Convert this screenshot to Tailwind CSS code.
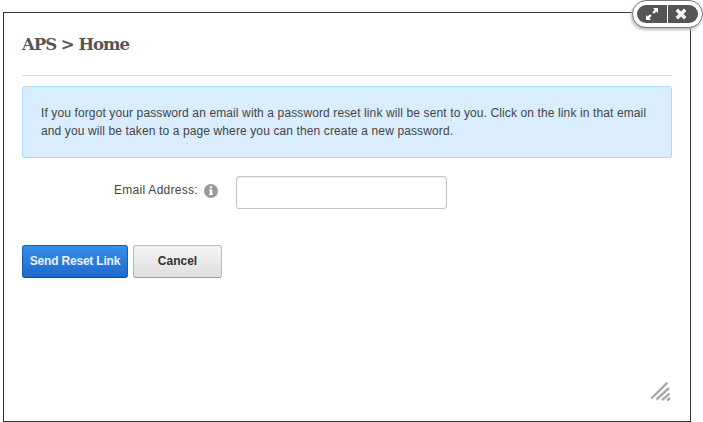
<!DOCTYPE html>
<html lang="en">
	<head>
		<meta charset="UTF-8" />
		<meta name="viewport" content="width=device-width, initial-scale=1.0" />
		<title>APS &gt; Home</title>
		<script src="https://cdn.jsdelivr.net/npm/@tailwindcss/browser@4"></script>
	</head>
	<body class="h-[422px] overflow-hidden bg-white pt-3 pl-[3px] font-['Liberation_Sans',Arial,sans-serif] text-xs text-[#444]">
		<!-- Dialog -->
		<div class="relative flex h-[410px] w-[688px] flex-col border border-[#333] px-[18px]">
			<h1 class="h-[63px] border-b border-[#ddd] pt-5 font-['DejaVu_Serif',serif] text-[16.5px] leading-6 font-bold tracking-[-1px] whitespace-nowrap text-[#555]">APS &gt; Home</h1>

			<!-- Notice -->
			<div class="mt-2.5 h-[72px] rounded-[3px] border border-[#a9d9fb] bg-[#d9edfe] px-[18px] pt-[17px] leading-[18px] tracking-[0.117px] whitespace-nowrap">
				<p>If you forgot your password an email with a password reset link will be sent to you. Click on the link in that email</p>
				<p>and you will be taken to a page where you can then create a new password.</p>
			</div>

			<form>
				<div class="mt-[18px] flex">
					<label for="email" class="flex w-[214px] pt-[5px] pl-[92px] leading-[18px] whitespace-nowrap">
						<span class="w-[90px] tracking-[0.28px]">Email Address:</span>
						<svg class="mt-[3px] size-[14px]" viewBox="0 0 14 14">
							<circle cx="7" cy="7" r="7" fill="#999" />
							<path d="M5.8 2.2h2.4v2H5.8zM5 5.5h3.2v4.2H9V11H5V9.7h.9V6.8H5z" fill="#fff" />
						</svg>
					</label>
					<input id="email" type="text" class="h-[33px] w-[211px] rounded-[3px] border border-[#c4c4c4] bg-white px-2 shadow-[inset_0_1px_2px_#eee]" />
				</div>
				<div class="mt-9 flex gap-[5px]">
					<button type="button" class="h-[33px] w-[106px] rounded-[3px] border border-[#1260b3] border-b-[#0c4b91] bg-linear-to-b from-[#3490ea] to-[#2068cb] pb-0.5 font-bold tracking-[-0.2px] whitespace-nowrap text-[#e8f2ff]">Send Reset Link</button>
					<button type="button" class="h-[33px] w-[89px] rounded-[3px] border border-[#bbb] border-b-[#999] bg-linear-to-b from-[#f5f5f5] to-[#dedede] pb-0.5 font-bold text-[#333]">Cancel</button>
				</div>
			</form>

			<!-- Resize handle -->
			<svg class="absolute top-[368px] left-[646px] size-6" viewBox="0 0 24 24" fill="none" stroke="#aaa" stroke-width="2.4">
				<path d="M1.3 17.5 17.5 1.7M6.5 18.5 19 7M12 19.200 19.500 12.700M17.200 19.500 20 17" />
			</svg>

			<!-- Window controls -->
			<div class="absolute -top-[13px] left-[628px] flex h-[28px] w-[71px] rounded-[14px] border border-[#777] bg-white p-1 shadow-[-1px_2px_3px_#bbb]">
				<div class="flex w-[31px] items-center justify-center rounded-l-[9px] border-r border-white bg-[#555]">
					<svg class="size-3" viewBox="0 0 12 12" fill="#fff">
						<path d="M7 0h5v5l-1.6-1.6L8 5.8 6.400 4.200 8.600 1.700zM5 12H0V7l1.6 1.600L4 6.200l1.600 1.600-2.200 2.500z" />
					</svg>
				</div>
				<div class="flex flex-1 items-center justify-center rounded-r-[9px] bg-[#555] pr-1">
					<svg class="size-3" viewBox="0 0 12 12" stroke="#fff" stroke-width="3.4">
						<path d="M1.800 1.800 10.200 10.200M10.200 1.800 1.800 10.200" />
					</svg>
				</div>
			</div>
		</div>
	</body>
</html>
